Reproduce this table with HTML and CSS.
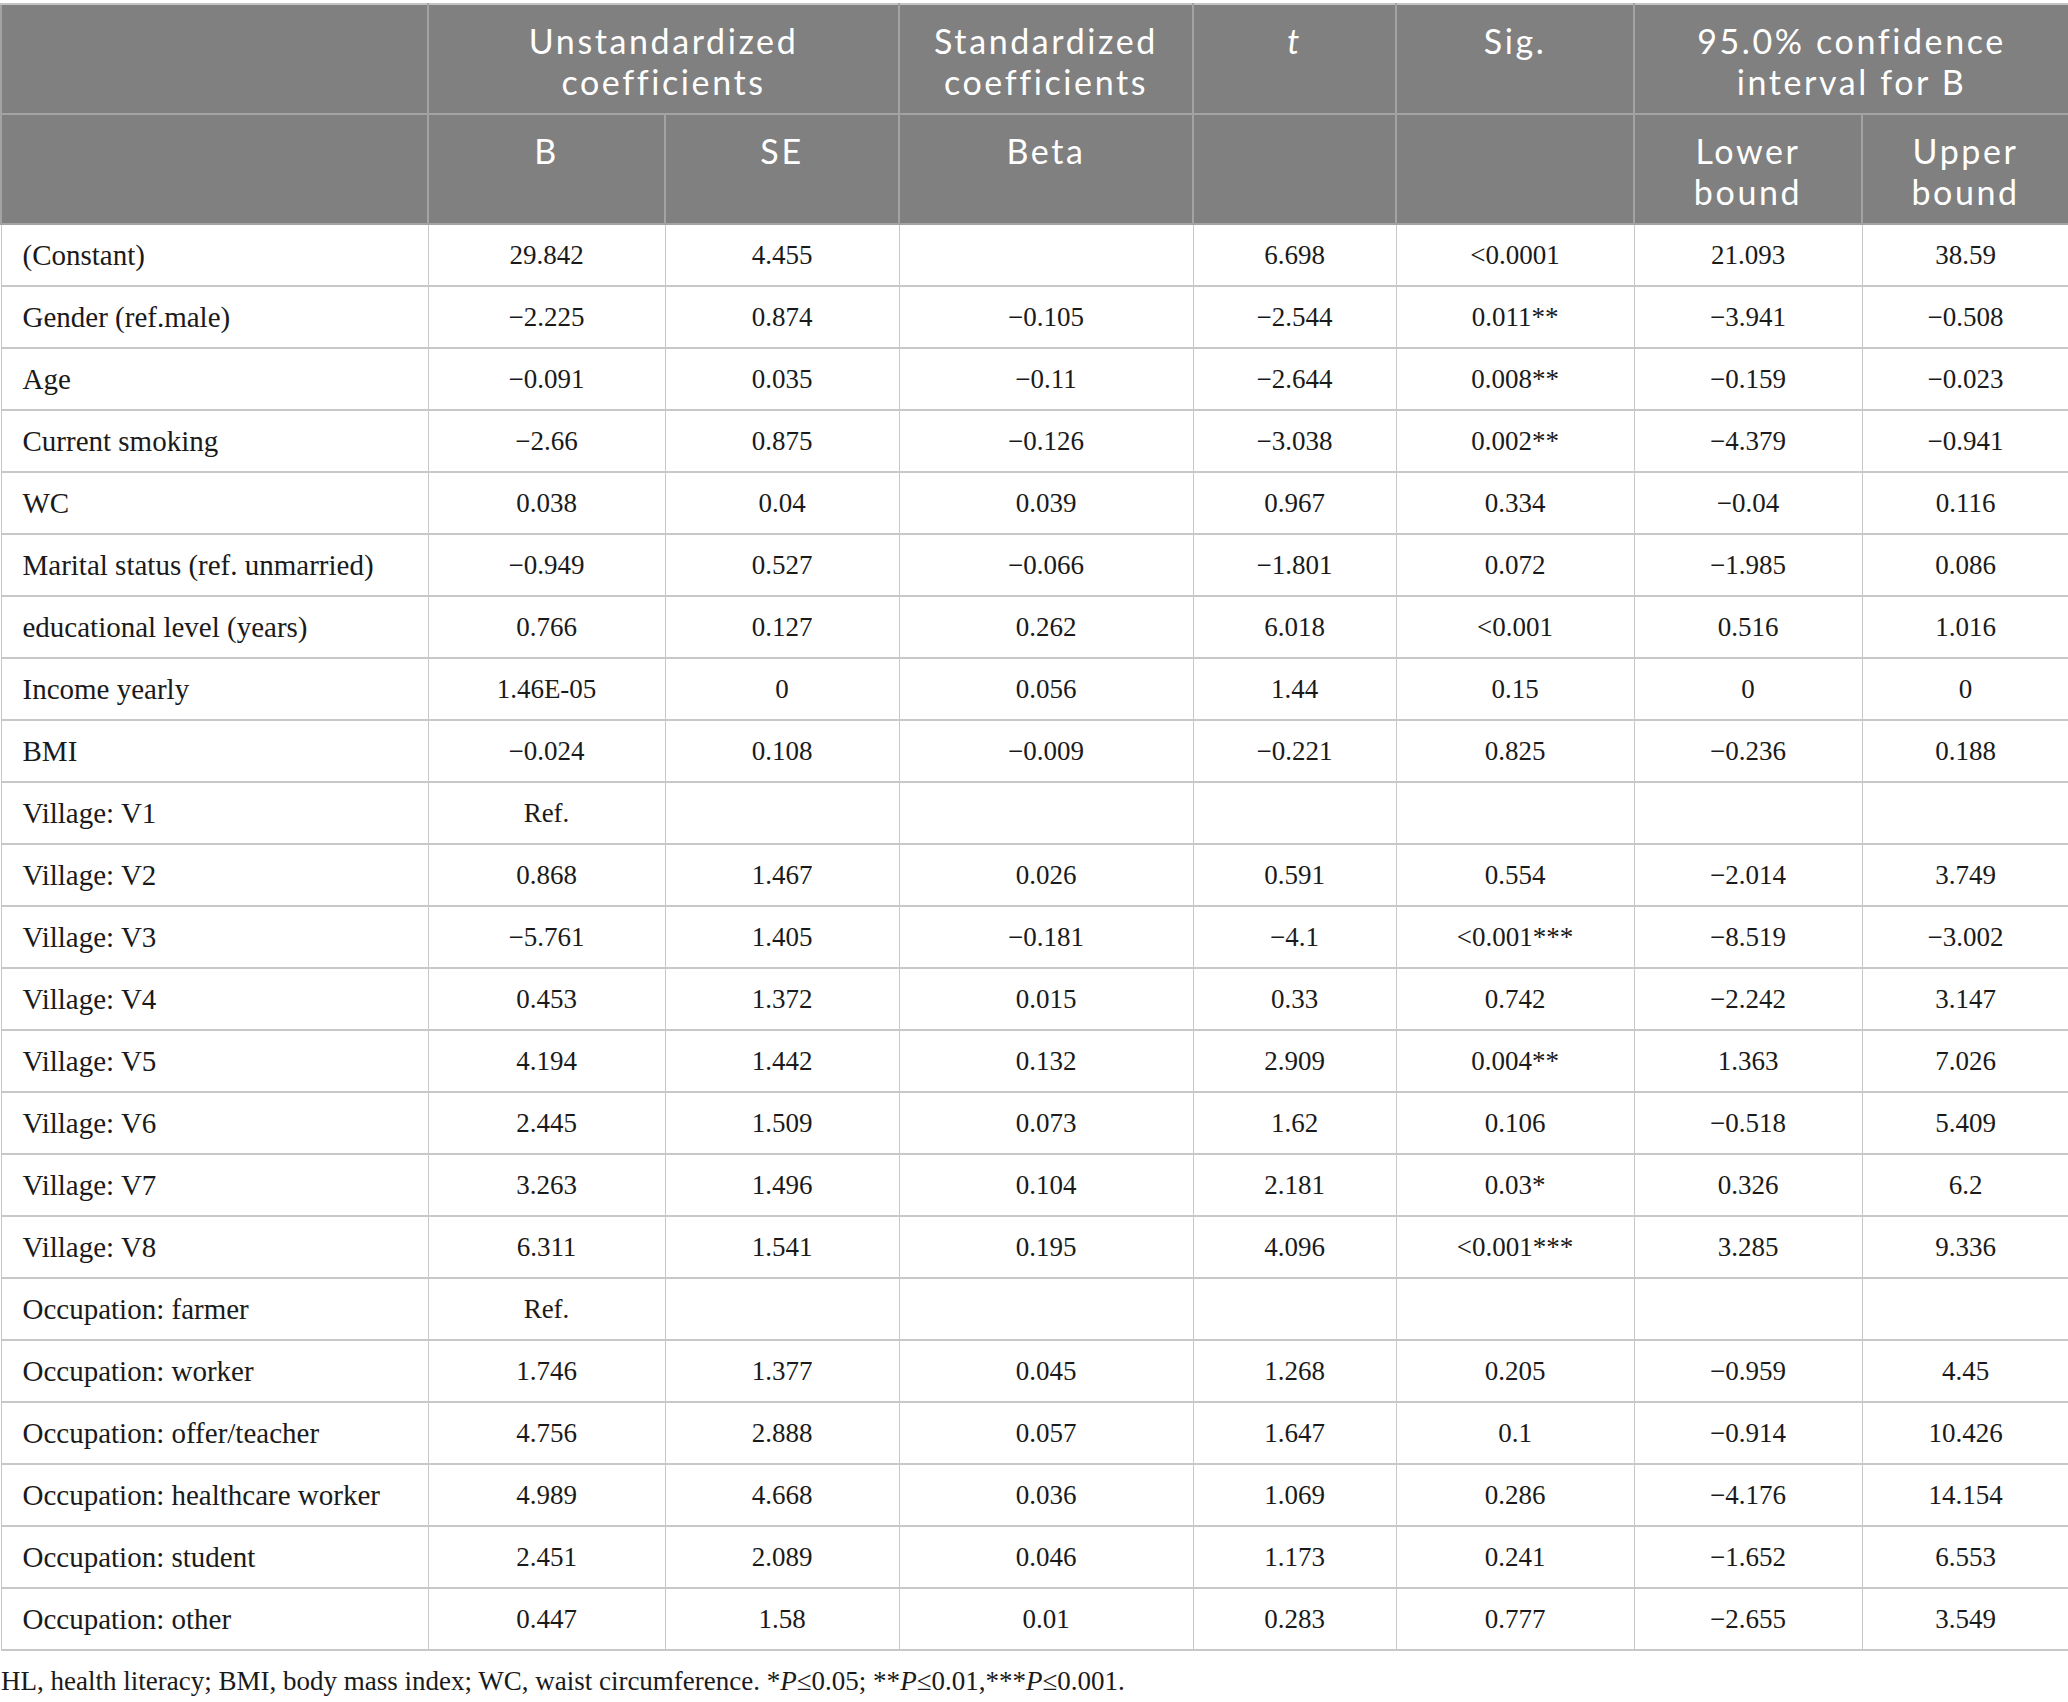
FILE: index.html
```html
<!DOCTYPE html>
<html lang="en">
<head>
<meta charset="utf-8">
<title>Regression table</title>
<link rel="stylesheet" href="styles.css">
</head>
<body>
<table class="tbl">
<colgroup>
<col class="c-label"><col class="c-b"><col class="c-se"><col class="c-beta"><col class="c-t"><col class="c-sig"><col class="c-lo"><col class="c-up">
</colgroup>
<thead>
<tr class="h1">
<th></th>
<th colspan="2">Unstandardized<br>coefficients</th>
<th>Standardized<br>coefficients</th>
<th><i>t</i></th>
<th>Sig.</th>
<th colspan="2">95.0% confidence<br>interval for B</th>
</tr>
<tr class="h2">
<th></th>
<th>B</th>
<th>SE</th>
<th>Beta</th>
<th></th>
<th></th>
<th>Lower<br>bound</th>
<th>Upper<br>bound</th>
</tr>
</thead>
<tbody>
<tr><td>(Constant)</td><td>29.842</td><td>4.455</td><td></td><td>6.698</td><td>&lt;0.0001</td><td>21.093</td><td>38.59</td></tr>
<tr><td>Gender (ref.male)</td><td>−2.225</td><td>0.874</td><td>−0.105</td><td>−2.544</td><td>0.011**</td><td>−3.941</td><td>−0.508</td></tr>
<tr><td>Age</td><td>−0.091</td><td>0.035</td><td>−0.11</td><td>−2.644</td><td>0.008**</td><td>−0.159</td><td>−0.023</td></tr>
<tr><td>Current smoking</td><td>−2.66</td><td>0.875</td><td>−0.126</td><td>−3.038</td><td>0.002**</td><td>−4.379</td><td>−0.941</td></tr>
<tr><td>WC</td><td>0.038</td><td>0.04</td><td>0.039</td><td>0.967</td><td>0.334</td><td>−0.04</td><td>0.116</td></tr>
<tr><td>Marital status (ref. unmarried)</td><td>−0.949</td><td>0.527</td><td>−0.066</td><td>−1.801</td><td>0.072</td><td>−1.985</td><td>0.086</td></tr>
<tr><td>educational level (years)</td><td>0.766</td><td>0.127</td><td>0.262</td><td>6.018</td><td>&lt;0.001</td><td>0.516</td><td>1.016</td></tr>
<tr><td>Income yearly</td><td>1.46E-05</td><td>0</td><td>0.056</td><td>1.44</td><td>0.15</td><td>0</td><td>0</td></tr>
<tr><td>BMI</td><td>−0.024</td><td>0.108</td><td>−0.009</td><td>−0.221</td><td>0.825</td><td>−0.236</td><td>0.188</td></tr>
<tr><td>Village: V1</td><td>Ref.</td><td></td><td></td><td></td><td></td><td></td><td></td></tr>
<tr><td>Village: V2</td><td>0.868</td><td>1.467</td><td>0.026</td><td>0.591</td><td>0.554</td><td>−2.014</td><td>3.749</td></tr>
<tr><td>Village: V3</td><td>−5.761</td><td>1.405</td><td>−0.181</td><td>−4.1</td><td>&lt;0.001***</td><td>−8.519</td><td>−3.002</td></tr>
<tr><td>Village: V4</td><td>0.453</td><td>1.372</td><td>0.015</td><td>0.33</td><td>0.742</td><td>−2.242</td><td>3.147</td></tr>
<tr><td>Village: V5</td><td>4.194</td><td>1.442</td><td>0.132</td><td>2.909</td><td>0.004**</td><td>1.363</td><td>7.026</td></tr>
<tr><td>Village: V6</td><td>2.445</td><td>1.509</td><td>0.073</td><td>1.62</td><td>0.106</td><td>−0.518</td><td>5.409</td></tr>
<tr><td>Village: V7</td><td>3.263</td><td>1.496</td><td>0.104</td><td>2.181</td><td>0.03*</td><td>0.326</td><td>6.2</td></tr>
<tr><td>Village: V8</td><td>6.311</td><td>1.541</td><td>0.195</td><td>4.096</td><td>&lt;0.001***</td><td>3.285</td><td>9.336</td></tr>
<tr><td>Occupation: farmer</td><td>Ref.</td><td></td><td></td><td></td><td></td><td></td><td></td></tr>
<tr><td>Occupation: worker</td><td>1.746</td><td>1.377</td><td>0.045</td><td>1.268</td><td>0.205</td><td>−0.959</td><td>4.45</td></tr>
<tr><td>Occupation: offer/teacher</td><td>4.756</td><td>2.888</td><td>0.057</td><td>1.647</td><td>0.1</td><td>−0.914</td><td>10.426</td></tr>
<tr><td>Occupation: healthcare worker</td><td>4.989</td><td>4.668</td><td>0.036</td><td>1.069</td><td>0.286</td><td>−4.176</td><td>14.154</td></tr>
<tr><td>Occupation: student</td><td>2.451</td><td>2.089</td><td>0.046</td><td>1.173</td><td>0.241</td><td>−1.652</td><td>6.553</td></tr>
<tr><td>Occupation: other</td><td>0.447</td><td>1.58</td><td>0.01</td><td>0.283</td><td>0.777</td><td>−2.655</td><td>3.549</td></tr>
</tbody>
</table>
<p class="note">HL, health literacy; BMI, body mass index; WC, waist circumference. *<i>P</i>≤0.05; **<i>P</i>≤0.01,***<i>P</i>≤0.001.</p>
</body>
</html>
```
FILE: styles.css
```css
html, body {
  margin: 0;
  padding: 0;
  background: #ffffff;
}
body {
  padding-top: 3px;
  font-family: "Liberation Serif", "Times New Roman", serif;
  color: #1a1a1a;
}
.tbl {
  width: 2068px;
  border-collapse: collapse;
  table-layout: fixed;
}
.c-label { width: 427px; }
.c-b { width: 237px; }
.c-se { width: 234px; }
.c-beta { width: 294px; }
.c-t { width: 203px; }
.c-sig { width: 238px; }
.c-lo { width: 228px; }
.c-up { width: 207px; }

.tbl th {
  background: #808080;
  color: #ffffff;
  font-family: Lato, "Open Sans", sans-serif;
  font-weight: 400;
  font-size: 34px;
  line-height: 41px;
  letter-spacing: 2.6px;
  text-align: center;
  vertical-align: top;
  padding: 15px 6px 0;
  height: 110px;
  box-sizing: border-box;
  border: 2px solid #a3a3a3;
}
.tbl thead tr.h1 th { border-top-color: #c4c4c4; }
.tbl td {
  font-size: 27px;
  height: 62px;
  box-sizing: border-box;
  padding: 0 6px;
  text-align: center;
  vertical-align: middle;
  border-top: 2px solid #c8c8c8;
  border-bottom: 2px solid #c8c8c8;
  border-left: 1.5px solid #c8c8c8;
  border-right: 1.5px solid #c8c8c8;
}
.tbl td:first-child {
  text-align: left;
  padding-left: 21px;
  font-size: 29px;
}
.note {
  margin: 14px 0 0 1px;
  font-size: 27px;
  line-height: 32px;
  color: #1a1a1a;
}
```
